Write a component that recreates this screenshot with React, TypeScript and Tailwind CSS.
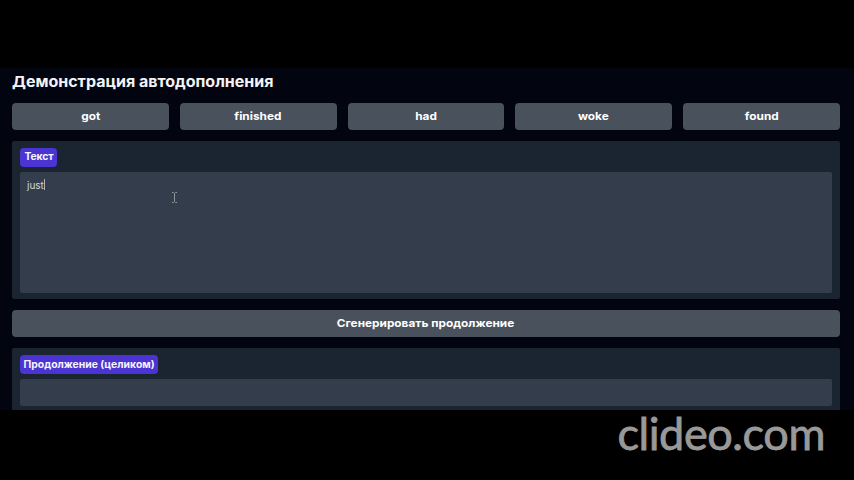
import React from "react";

const suggestions = ["got", "finished", "had", "woke", "found"];

function Label({ children, className }: { children: React.ReactNode; className: string }) {
  return (
    <div className={`flex h-[19px] items-center justify-center whitespace-nowrap rounded-[4px] bg-[#4b34d2] pb-px font-bold text-[#f5f5ff] ${className}`}>
      <span className="inline-block scale-x-[1.04]">{children}</span>
    </div>
  );
}

function ActionButton({ children, className }: { children: React.ReactNode; className?: string }) {
  return (
    <button className={`h-[27px] rounded-[4px] bg-[#49515d] text-[11px] font-bold text-white ${className ?? ""}`}>
      <span className="inline-block scale-x-[1.075]">{children}</span>
    </button>
  );
}

function Watermark() {
  return (
    <div className="flex h-[70px] justify-end pr-[29px]">
      <span className="whitespace-nowrap font-['Lato',sans-serif] text-[45px] leading-[46px] tracking-[-0.4px] text-[#999999] [-webkit-text-stroke:0.8px_#999999]">clideo.com</span>
    </div>
  );
}

export default function App() {
  return (
    <div className="relative h-[480px] w-[854px] overflow-hidden bg-black pt-[68px] font-['Inter',sans-serif]">
      <main className="h-[342px] overflow-hidden bg-[#020510] pl-3 pr-[14px]">
        <h1 className="flex h-[35px] items-start whitespace-nowrap pt-[4px] text-[15px] font-bold leading-5 text-[#f3f4f6]">
          <span className="inline-block origin-left scale-x-[1.067]">Демонстрация автодополнения</span>
        </h1>
        <div className="grid grid-cols-5 gap-[11px]">
          {suggestions.map((word) => (
            <ActionButton key={word}>{word}</ActionButton>
          ))}
        </div>
        <section className="mt-[11px] h-[158px] rounded-[2px] bg-[#1b2531] px-2 pt-[6.5px]">
          <Label className="w-[37px] text-[10px] tracking-[-0.1px]">Текст</Label>
          <div className="mt-[5.5px] flex h-[121px] items-start rounded-[2px] bg-[#343d4c] pl-[7px] pt-[7px] text-[10px] leading-[12px] text-[#d5d9de]">
            <span>just</span>
            <span className="h-[11px] w-px bg-[#aeb4bd]" />
          </div>
        </section>
        <ActionButton className="mt-[11px] w-full">Сгенерировать продолжение</ActionButton>
        <section className="mt-[11px] h-[70px] rounded-[2px] bg-[#1b2531] px-2 pt-[7px]">
          <Label className="w-[138px] text-[10px]">Продолжение (целиком)</Label>
          <div className="mt-[5px] h-[27px] rounded-[2px] bg-[#343d4c]" />
        </section>
      </main>
      <Watermark />
      <svg className="absolute left-[171px] top-[192px] h-[11px] w-[7px]" viewBox="0 0 7 11" fill="none" stroke="#8f959d" strokeWidth="1">
        <path d="M1 .5h1.5l1 1 1-1H6M3.5 1.5v8M1 10.5h1.5l1-1 1 1H6" />
      </svg>
    </div>
  );
}
